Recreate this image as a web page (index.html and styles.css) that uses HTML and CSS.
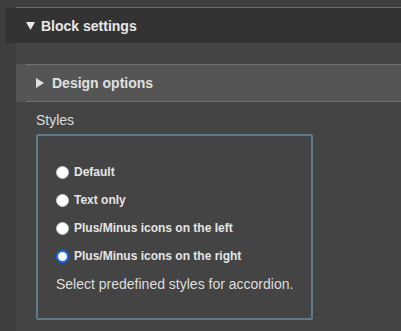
FILE: index.html
```html
<!DOCTYPE html>
<html>
<head>
<meta charset="utf-8">
<link rel="stylesheet" href="styles.css">
</head>
<body>
<div class="panel">
  <div class="header">
    <svg class="tri-down" width="9" height="8" viewBox="0 0 9 8"><polygon points="0,0 9,0 4.5,8" fill="#e8e8e8"/></svg>
    <span>Block settings</span>
  </div>
  <div class="design">
    <svg class="tri-right" width="8" height="10" viewBox="0 0 8 10"><polygon points="0,0 8,5 0,10" fill="#e0e0e0"/></svg>
    <span>Design options</span>
  </div>
  <div class="content">
    <div class="label">Styles</div>
    <div class="fieldset">
      <label class="row"><input type="radio" name="s"><span>Default</span></label>
      <label class="row"><input type="radio" name="s"><span>Text only</span></label>
      <label class="row"><input type="radio" name="s"><span>Plus/Minus icons on the left</span></label>
      <label class="row"><input type="radio" name="s" checked><span>Plus/Minus icons on the right</span></label>
      <div class="help">Select predefined styles for accordion.</div>
    </div>
  </div>
</div>
</body>
</html>
```
FILE: styles.css
```css
html, body {
  margin: 0;
  padding: 0;
  height: 100%;
}
body {
  background: #3e3e3e;
  font-family: "Liberation Sans", Arial, sans-serif;
  color: #e4e4e4;
  overflow: hidden;
}
.panel {
  margin: 7px 0 0 16px;
  border-top: 1px solid #6e6e6e;
  background: #444;
  height: 323px;
}
.header {
  margin-left: -10px;
  height: 35px;
  background: #333;
  display: flex;
  align-items: center;
  padding-left: 20px;
  font-size: 14px;
  font-weight: bold;
  color: #e8e8e8;
}
.tri-down {
  margin-right: 6px;
  margin-top: 1px;
}
.design {
  margin-top: 21px;
  margin-left: 10px;
  height: 36px;
  background: #555;
  border-top: 1px solid #707070;
  border-bottom: 1px solid #707070;
  box-shadow: -10px 0 0 0 #555;
  display: flex;
  align-items: center;
  padding-left: 10px;
  font-size: 14px;
  font-weight: bold;
  color: #e0e0e0;
}
.tri-right {
  margin-right: 8px;
}
.content {
  padding-left: 20px;
}
.label {
  margin-top: 10px;
  font-size: 14px;
  line-height: 16px;
  color: #dedede;
}
.fieldset {
  margin-top: 6px;
  width: 255px;
  border: 2px solid #5b7a8b;
  border-radius: 2px;
  padding: 22px 0 20px 18px;
}
.row {
  display: flex;
  align-items: center;
  height: 28px;
  font-size: 12px;
  font-weight: bold;
  color: #e4e4e4;
}
.row input {
  appearance: none;
  -webkit-appearance: none;
  box-sizing: border-box;
  margin: 0 5px 0 0;
  width: 13px;
  height: 13px;
  border-radius: 50%;
  background: #fff;
  border: 1px solid #c8c8c8;
}
.row input:checked {
  border: 2.5px solid #0a6ef5;
  background: #fff;
}
.help {
  font-size: 14px;
  line-height: 28px;
  color: #dedede;
}
```
